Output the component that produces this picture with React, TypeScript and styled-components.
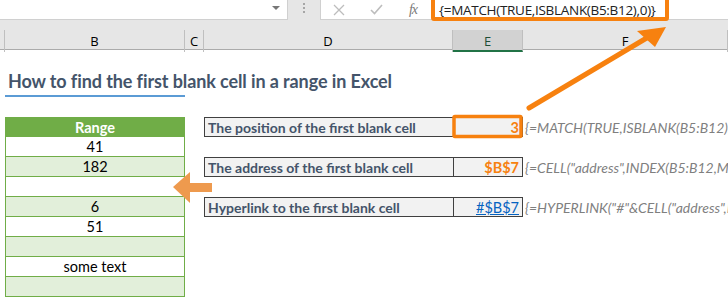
import React from "react";
import styled, { createGlobalStyle } from "styled-components";

const Global = createGlobalStyle`
  html, body { margin: 0; padding: 0; background: #ffffff; }
  body { overflow: hidden; }
  * { box-sizing: border-box; }
`;

const Page = styled.div`
  position: relative;
  width: 728px;
  height: 298px;
  overflow: hidden;
  background: #ffffff;
  font-family: Lato, "Liberation Sans", sans-serif;
`;

const Chrome = styled.div`
  background: #e6e6e6;
  height: 50px;
  display: flex;
  flex-direction: column;
`;

const FormulaBar = styled.div`
  display: flex;
  height: 20px;
`;

const NameBox = styled.div`
  width: 288px;
  height: 20px;
  background: #ffffff;
  border-bottom: 1px solid #d0d0d0;
  border-right: 1px solid #d0d0d0;
  position: relative;
`;

const Caret = styled.span`
  position: absolute;
  right: 7px;
  top: 6px;
  width: 0;
  height: 0;
  border-left: 4px solid transparent;
  border-right: 4px solid transparent;
  border-top: 4px solid #777777;
`;

const Grip = styled.div`
  width: 32px;
  display: flex;
  flex-direction: column;
  align-items: center;
  gap: 2px;
  padding-top: 3px;
`;

const Dot = styled.span`
  width: 2px;
  height: 2px;
  background: #a6a6a6;
`;

const FormulaArea = styled.div`
  flex: 1;
  display: flex;
  align-items: center;
  background: #ffffff;
  border-bottom: 1px solid #d0d0d0;
  border-left: 1px solid #d0d0d0;
`;

const BarIcon = styled.span<{ $w: number }>`
  width: ${(p) => p.$w}px;
  display: flex;
  justify-content: center;
  align-items: center;
  color: #bdbdbd;
`;

const Fx = styled.span`
  width: 36px;
  text-align: center;
  font-family: "Liberation Serif", serif;
  font-style: italic;
  font-size: 14px;
  color: #7a7a7a;
  letter-spacing: -1px;
`;

const FormulaText = styled.span`
  padding-left: 8px;
  font-family: "Open Sans", sans-serif;
  font-size: 13.5px;
  color: #222222;
  white-space: nowrap;
  letter-spacing: -0.3px;
`;

const HeaderRow = styled.div`
  margin-top: 10px;
  height: 20px;
  display: grid;
  grid-template-columns: 5px 180px 19px 249px 70px 1fr;
  border-bottom: 1px solid #ababab;
`;

const ColHead = styled.div<{ $sel?: boolean }>`
  display: flex;
  align-items: center;
  justify-content: center;
  font-family: "Open Sans", sans-serif;
  font-size: 13px;
  color: ${(p) => (p.$sel ? "#1f4e36" : "#000000")};
  background: ${(p) => (p.$sel ? "#d2d2d2" : "transparent")};
  border-right: 1px solid #bfbfbf;
  border-bottom: ${(p) => (p.$sel ? "2px solid #217346" : "none")};
  padding-top: ${(p) => (p.$sel ? "2px" : "0")};
`;

const Sheet = styled.div`
  display: grid;
  grid-template-columns: 5px 180px 19px 249px 70px 1fr;
  grid-template-rows: 47px 20px repeat(9, 20px);
`;

const TitleCell = styled.div`
  grid-column: 2;
  grid-row: 1;
  border-bottom: 2px solid #5b9bd5;
  white-space: nowrap;
  font-weight: 700;
  font-size: 18px;
  letter-spacing: -0.1px;
  color: #44546a;
  padding: 20px 0 0 3px;
  line-height: 22px;
`;

const RangeCell = styled.div<{ $row: number; $shade: "head" | "green" | "white" }>`
  grid-column: 2;
  grid-row: ${(p) => p.$row};
  display: flex;
  align-items: center;
  justify-content: center;
  font-size: 14.5px;
  color: ${(p) => (p.$shade === "head" ? "#ffffff" : "#000000")};
  font-weight: ${(p) => (p.$shade === "head" ? 700 : 400)};
  background: ${(p) =>
    p.$shade === "head" ? "#70ad47" : p.$shade === "green" ? "#e2efda" : "#ffffff"};
  border-left: 1px solid #70ad47;
  border-right: 1px solid #70ad47;
  border-bottom: 1px solid #70ad47;
  border-top: ${(p) => (p.$shade === "head" ? "1px solid #70ad47" : "none")};
`;

const LabelCell = styled.div<{ $row: number }>`
  grid-column: 4;
  grid-row: ${(p) => p.$row};
  background: #f2f2f2;
  border: 1px solid #404040;
  border-right: none;
  font-weight: 700;
  font-size: 14px;
  color: #44546a;
  padding-left: 3px;
  display: flex;
  align-items: center;
  white-space: nowrap;
`;

const ValueCell = styled.div<{ $row: number; $tone: "orange" | "link" }>`
  grid-column: 5;
  grid-row: ${(p) => p.$row};
  background: #f2f2f2;
  border: 1px solid #404040;
  display: flex;
  align-items: center;
  justify-content: flex-end;
  padding-right: 3px;
  font-size: 14.5px;
  font-weight: ${(p) => (p.$tone === "orange" ? 700 : 400)};
  color: ${(p) => (p.$tone === "orange" ? "#f7810f" : "#0563c1")};
  text-decoration: ${(p) => (p.$tone === "link" ? "underline" : "none")};
`;

const NoteCell = styled.div<{ $row: number }>`
  grid-column: 6;
  grid-row: ${(p) => p.$row};
  display: flex;
  align-items: center;
  padding-left: 2px;
  white-space: nowrap;
  overflow: hidden;
  font-style: italic;
  font-size: 14px;
  color: #7f7f7f;
`;

const Overlay = styled.svg`
  position: absolute;
  left: 0;
  top: 0;
  pointer-events: none;
`;

const rangeRows: { v: string; s: "green" | "white" }[] = [
  { v: "41", s: "white" },
  { v: "182", s: "green" },
  { v: "", s: "white" },
  { v: "6", s: "green" },
  { v: "51", s: "white" },
  { v: "", s: "green" },
  { v: "some text", s: "white" },
  { v: "", s: "green" },
];

export default function App() {
  return (
    <Page>
      <Global />
      <Chrome>
        <FormulaBar>
          <NameBox>
            <Caret />
          </NameBox>
          <Grip>
            <Dot />
            <Dot />
            <Dot />
          </Grip>
          <FormulaArea>
            <BarIcon $w={36}>
              <svg width="12" height="12" viewBox="0 0 12 12">
                <path d="M1 1 L11 11 M11 1 L1 11" stroke="#bdbdbd" strokeWidth="1.3" fill="none" />
              </svg>
            </BarIcon>
            <BarIcon $w={38}>
              <svg width="13" height="11" viewBox="0 0 13 11">
                <path d="M1 6 L4.5 9.5 L12 1" stroke="#bdbdbd" strokeWidth="1.6" fill="none" />
              </svg>
            </BarIcon>
            <Fx>fx</Fx>
            <FormulaText>{"{=MATCH(TRUE,ISBLANK(B5:B12),0)}"}</FormulaText>
          </FormulaArea>
        </FormulaBar>
        <HeaderRow>
          <ColHead />
          <ColHead>B</ColHead>
          <ColHead>C</ColHead>
          <ColHead>D</ColHead>
          <ColHead $sel>E</ColHead>
          <ColHead>F</ColHead>
        </HeaderRow>
      </Chrome>
      <Sheet>
        <TitleCell>How to find the first blank cell in a range in Excel</TitleCell>
        <RangeCell $row={3} $shade="head">
          Range
        </RangeCell>
        {rangeRows.map((r, i) => (
          <RangeCell key={i} $row={4 + i} $shade={r.s}>
            {r.v}
          </RangeCell>
        ))}
        <LabelCell $row={3}>The position of the first blank cell</LabelCell>
        <ValueCell $row={3} $tone="orange">3</ValueCell>
        <NoteCell $row={3}>{"{=MATCH(TRUE,ISBLANK(B5:B12),0)}"}</NoteCell>
        <LabelCell $row={5}>The address of the first blank cell</LabelCell>
        <ValueCell $row={5} $tone="orange">$B$7</ValueCell>
        <NoteCell $row={5}>{'{=CELL("address",INDEX(B5:B12,MATCH(TRUE,ISBLANK(B5:B12),0)))}'}</NoteCell>
        <LabelCell $row={7}>Hyperlink to the first blank cell</LabelCell>
        <ValueCell $row={7} $tone="link">#$B$7</ValueCell>
        <NoteCell $row={7}>{'{=HYPERLINK("#"&CELL("address",INDEX(B5:B12,MATCH(TRUE,ISBLANK(B5:B12),0))),CELL("address"))}'}</NoteCell>
      </Sheet>
      <Overlay width="728" height="298" viewBox="0 0 728 298">
        <rect x="433" y="-2" width="234" height="21" fill="none" stroke="#f7810f" strokeWidth="4" rx="1" />
        <rect x="454" y="116.5" width="67" height="20" fill="none" stroke="#f7810f" strokeWidth="3.5" rx="1" />
        <line x1="529" y1="108" x2="650" y2="36" stroke="#f7810f" strokeWidth="5" strokeLinecap="round" />
        <polygon points="666,27 637,31 655,47" fill="#f7810f" />
        <polygon points="173,187 190,172 190,183 212,183 212,192 190,192 190,203" fill="#ee9a4e" />
      </Overlay>
    </Page>
  );
}
